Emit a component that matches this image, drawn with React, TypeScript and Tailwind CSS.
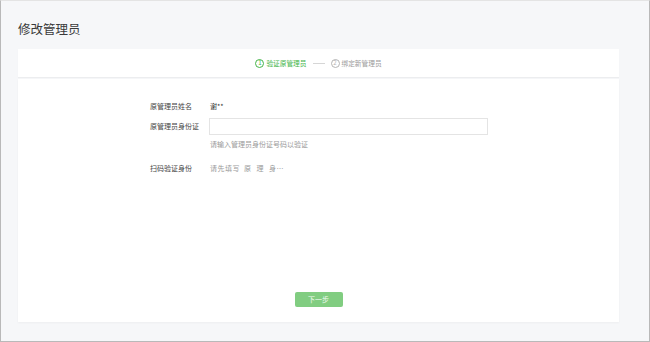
import { useState } from "react"

const font = { fontFamily: '"Noto Sans CJK SC", "Noto Sans", sans-serif' }

type Step = { no: number; label: string }

const steps: Step[] = [
  { no: 1, label: "验证原管理员" },
  { no: 2, label: "绑定新管理员" },
]

const App = () => {
  const [idCard, setIdCard] = useState("")
  const active = 1

  return (
    <div
      style={font}
      className="box-border h-[342px] w-[650px] overflow-hidden border border-[#b9b9b9] border-t-[#e4e4e4] bg-[#f6f7f9] px-[17px] pt-[20px]"
    >
      <h2 className="text-[12.5px] leading-[16px] font-normal text-[#3a3a3a]">修改管理员</h2>

      <div className="mt-[12px] w-[601px]">
        <div className="flex h-[28px] items-center justify-center bg-white shadow-[0_1px_1px_rgba(0,0,0,0.04)]">
          {steps.map((step, i) => {
            const isActive = step.no === active
            return (
              <div key={step.no} className="flex items-center">
                {i > 0 && <span className="mx-[6px] h-px w-[12px] bg-[#d6d6d6]" />}
                <span
                  className={`flex size-[9px] items-center justify-center rounded-full border text-[6px] leading-none ${
                    isActive ? "border-[#44b549] text-[#44b549]" : "border-[#b5b5b5] text-[#b5b5b5]"
                  }`}
                >
                  {step.no}
                </span>
                <span
                  className={`ml-[2px] text-[6.7px] leading-none ${
                    isActive ? "text-[#44b549]" : "text-[#9a9a9a]"
                  }`}
                >
                  {step.label}
                </span>
              </div>
            )
          })}
        </div>

        <div className="mt-[2px] flex h-[243px] flex-col bg-white pt-[21px] pl-[132px] shadow-[0_1px_2px_rgba(0,0,0,0.04)]">
          <div className="flex h-[12px] items-center text-[7px] leading-none">
            <span className="w-[60px] text-[#444]">原管理员姓名</span>
            <span className="text-[#333]">谢**</span>
          </div>

          <div className="mt-[6px] flex items-center text-[7px] leading-none">
            <span className="w-[59px] text-[#444]">原管理员身份证</span>
            <input
              value={idCard}
              onChange={(e) => setIdCard(e.target.value)}
              className="h-[17px] w-[279px] border border-[#e4e4e4] bg-white px-[4px] text-[7px] outline-none"
            />
          </div>
          <p className="mt-[4px] ml-[60px] text-[7px] leading-[10px] text-[#9a9a9a]">
            请输入管理员身份证号码以验证
          </p>

          <div className="mt-[13px] flex h-[12px] items-center text-[7px] leading-none">
            <span className="w-[60px] text-[#444]">扫码验证身份</span>
            <span className="tracking-[0.5px] text-[#9a9a9a]">
              请先填写<span className="ml-[4px]">原</span>
              <span className="ml-[5px]">理</span>
              <span className="ml-[5px]">身…</span>
            </span>
          </div>

          <div className="mt-auto mb-[15px] -ml-[132px] flex justify-center">
            <button
              type="button"
              disabled
              className="h-[15px] w-[48px] rounded-[2px] bg-[#81cd81] text-[7px] leading-none text-white/90"
            >
              下一步
            </button>
          </div>
        </div>
      </div>
    </div>
  )
}

export default App
